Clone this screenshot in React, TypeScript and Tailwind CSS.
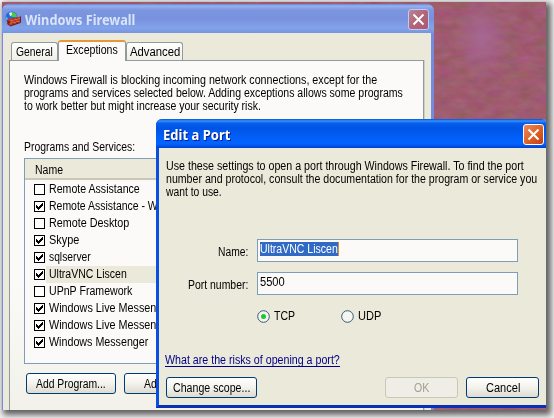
import { useLayoutEffect, useRef, useState } from "react";
import type { ReactNode } from "react";

// One line of text, condensed or widened so that it fills the given width.
function Line({ w, children, className = "" }: { w: number; children: string; className?: string }) {
  const ref = useRef<HTMLSpanElement>(null);
  const [scale, setScale] = useState(1);
  useLayoutEffect(() => {
    if (ref.current) setScale(w / ref.current.offsetWidth);
  }, [w, children]);
  return (
    <span className={`block ${className}`} style={{ width: w }}>
      <span ref={ref} className="inline-block origin-left whitespace-pre" style={{ transform: `scaleX(${scale})` }}>
        {children}
      </span>
    </span>
  );
}

function Wallpaper() {
  return (
    <svg className="absolute inset-0" width="544" height="408">
      <defs>
        <filter id="grain" x="0" y="0" width="100%" height="100%" colorInterpolationFilters="sRGB">
          <feTurbulence type="fractalNoise" baseFrequency="0.06 0.13" numOctaves="3" seed="8" />
          <feColorMatrix values="0.1 0 0 0 0.57  0 0.12 0 0 0.3  0.1 0 0.12 0 0.325  0 0 0 0 1" />
        </filter>
        <radialGradient id="glow">
          <stop offset="0" stopColor="#a8689a" stopOpacity="0.85" />
          <stop offset="1" stopColor="#a8689a" stopOpacity="0" />
        </radialGradient>
      </defs>
      <rect width="544" height="408" filter="url(#grain)" />
      <ellipse cx="480" cy="36" rx="28" ry="40" fill="url(#glow)" />
    </svg>
  );
}

function FirewallIcon() {
  return (
    <svg width="16" height="16" viewBox="0 0 16 16">
      <circle cx="6.500" cy="6.500" r="6" fill="#2468d8" />
      <path d="M5 2l3-1 3 2 1 3H8L5 5z" fill="#4fc84a" />
      <path d="M4 2l2.500-1L7 4 5 5z" fill="#d8f4ff" />
      <path d="M1.500 5.500 3 8l-1 2L.800 7z" fill="#58c8e0" />
      <path d="M3 7l2 1 10.500-2.500v6L5.500 15 2 12z" fill="#c43a20" />
      <path d="M2 9l3.500 2L3 13z" fill="#7a1614" />
      <path d="M5.500 9.800l10-2.300M5.500 12.200l10-2.500" stroke="#f0a888" strokeWidth=".6" fill="none" />
      <path d="M8 7.500v1.800M12 6.500v1.800M10 8.800v2M14 8v2M8 11.500v2.300M12 10.500v2.300" stroke="#6a1410" strokeWidth=".7" />
      <path d="M2 12.500l3.500 2.500 10-3.500V5.500" stroke="#4b1010" fill="none" strokeWidth=".8" />
    </svg>
  );
}

function CloseButton({ active }: { active?: boolean }) {
  return (
    <div
      className={`flex size-[21px] shrink-0 items-center justify-center rounded-[3px] border ${
        active
          ? "border-white bg-linear-to-br from-[#ef8660] via-[#df6426] to-[#c13c16]"
          : "border-[#bdcaf3] bg-linear-to-br from-[#b98398] via-[#b26577] to-[#a85a76]"
      }`}
    >
      <svg width="13" height="13" viewBox="0 0 13 13">
        <path d="M1.500 1.500l10 10M11.500 1.500l-10 10" stroke="#fff" strokeWidth="2" />
      </svg>
    </div>
  );
}

function Button({ children, className = "", disabled }: { children: ReactNode; className?: string; disabled?: boolean }) {
  return (
    <div
      className={`flex h-[21px] shrink-0 items-center justify-center rounded-[3px] border ${
        disabled
          ? "border-[#c9c7ba] bg-[#efeee6] text-[#a1a192]"
          : "border-[#003c74] bg-linear-to-b from-white via-[#f3f2ec] to-[#dedbd0]"
      } ${className}`}
    >
      {children}
    </div>
  );
}

function Checkbox({ checked }: { checked: boolean }) {
  return (
    <svg className="shrink-0" width="11" height="11" shapeRendering="crispEdges">
      <rect x=".5" y=".5" width="10" height="10" fill="#fff" stroke="#000" />
      {checked && <path d="M2 4h1v1h1v1h1v-1h1v-1h1v-1h1v-1h1v3h-1v1h-1v1h-1v1h-1v1h-1v-1h-1v-1h-1z" fill="#000" />}
    </svg>
  );
}

function Radio({ checked }: { checked?: boolean }) {
  return (
    <svg width="13" height="13">
      <circle cx="6.500" cy="6.500" r="5.800" fill="#f5f5f1" stroke="#3a5875" />
      {checked && <circle cx="6.500" cy="6.500" r="2.500" fill="#1fc832" />}
    </svg>
  );
}

const services = [
  { name: "Remote Assistance", w: 91, on: false },
  { name: "Remote Assistance - W", w: 109, on: true },
  { name: "Remote Desktop", w: 80, on: false },
  { name: "Skype", w: 30, on: true },
  { name: "sqlserver", w: 42, on: true },
  { name: "UltraVNC Liscen", w: 78, on: true, selected: true },
  { name: "UPnP Framework", w: 83, on: false },
  { name: "Windows Live Messen", w: 107, on: true },
  { name: "Windows Live Messen", w: 107, on: true },
  { name: "Windows Messenger", w: 99, on: true },
];

function FirewallWindow() {
  return (
    <div className="absolute top-[2px] left-0 flex h-[430px] w-[432px] flex-col overflow-hidden rounded-t-[7px] bg-[#758be0]">
      <div className="flex h-[29px] shrink-0 items-center justify-between bg-[linear-gradient(#6684da_0px,#98b1ed_2px,#7c96df_6px,#7991de_15px,#82a3e9_24px,#7794df_29px)] pr-[5px] pl-[3px]">
        <div className="flex items-center gap-1">
          <FirewallIcon />
          <Line w={110} className="pt-[2px] font-['Noto_Sans'] text-[14px] leading-[18px] font-bold text-[#d8e4f8]">Windows Firewall</Line>
        </div>
        <div className="pt-[2px]"><CloseButton /></div>
      </div>
      <div className="mr-[3px] ml-px flex flex-1 flex-col bg-[#ebe9d9] pt-[7px] pr-[7px] pl-[6px]">
        <div className="flex h-[20px] shrink-0 items-end pl-[2px]">
          <div className="flex h-[18px] w-[47px] justify-center rounded-t-[3px] border border-b-0 border-[#919b9c] bg-linear-to-b from-white to-[#efeee7] pt-[2px]">
            <Line w={37}>General</Line>
          </div>
          <div className="relative z-10 -mb-px flex h-[21px] w-[68px] justify-center rounded-t-[3px] border-x border-t-2 border-x-[#919b9c] border-t-[#e69738] bg-[#fbfaf8] pt-px">
            <Line w={52}>Exceptions</Line>
          </div>
          <div className="flex h-[18px] w-[57px] justify-center rounded-t-[3px] border border-b-0 border-[#919b9c] bg-linear-to-b from-white to-[#efeee7] pt-[2px]">
            <Line w={50}>Advanced</Line>
          </div>
        </div>
        <div className="flex flex-1 flex-col border border-[#919b9c] bg-linear-to-b from-[#fbfaf8] from-60% to-[#f0f0e8] px-[14px] pt-[13px] shadow-[1px_0_0_#cfcdbf]">
          <div className="leading-[13px]">
            <Line w={353}>Windows Firewall is blocking incoming network connections, except for the</Line>
            <Line w={379}>programs and services selected below. Adding exceptions allows some programs</Line>
            <Line w={237}>to work better but might increase your security risk.</Line>
          </div>
          <Line w={111} className="mt-[28px] leading-[13px]">Programs and Services:</Line>
          <div className="mt-[4px] h-[206px] shrink-0 border border-[#7f9db9] bg-[#fbfaf8]">
            <div className="mb-px flex h-[21px] items-center border-b-2 border-[#cbc7b8] bg-[#ebe9d9] pt-[3px] pl-[10px]">
              <Line w={28}>Name</Line>
            </div>
            {services.map((s, i) => (
              <div key={i} className="flex h-[17px] items-center pl-[9px]">
                <Checkbox checked={s.on} />
                <div className={`ml-px h-full flex-1 pl-[3px] leading-[17px] ${s.selected ? "bg-[#ebe9d9]" : ""}`}>
                  <Line w={s.w}>{s.name}</Line>
                </div>
              </div>
            ))}
          </div>
          <div className="mt-[9px] flex gap-[8px] pl-[2px]">
            <Button className="w-[90px]"><Line w={70}>Add Program...</Line></Button>
            <Button className="w-[90px] justify-start pl-[19px]"><Line w={13}>Ad</Line></Button>
          </div>
        </div>
      </div>
    </div>
  );
}

function Field({ label, lw, children }: { label: string; lw: number; children: ReactNode }) {
  return (
    <div className="flex h-[23px] items-center">
      <div className="flex w-[88px] justify-end pt-[3px]"><Line w={lw}>{label}</Line></div>
      <div className="ml-[9px] h-[23px] w-[261px] border border-[#7f9db9] bg-[#fbfaf8] pt-[2px] pl-[2px]">{children}</div>
    </div>
  );
}

function PortDialog() {
  return (
    <div className="absolute top-[117px] left-[154px] flex h-[289px] w-[392px] flex-col rounded-t-[6px] border-b-[3px] border-l-[3px] border-[#0831b5] border-l-[#0b4fe0] bg-[#ebe9d9]">
      <div className="-ml-[3px] flex h-[29px] shrink-0 items-center justify-between rounded-t-[6px] bg-[linear-gradient(#0750c8_0px,#3a91ff_2px,#0560ed_4px,#0054e3_9px,#0260fb_20px,#0264ff_25px,#0040cf_29px)] pr-[4px] pl-[7px]">
        <Line w={67} className="pt-[3px] font-['Noto_Sans'] text-[14px] leading-[18px] font-bold text-white [text-shadow:1px_1px_#0a1883]">Edit a Port</Line>
        <div className="pt-px"><CloseButton active /></div>
      </div>
      <div className="flex flex-col pt-[12px] pl-[7px]">
        <div className="leading-[13px]">
          <Line w={358}>Use these settings to open a port through Windows Firewall. To find the port</Line>
          <Line w={371}>number and protocol, consult the documentation for the program or service you</Line>
          <Line w={56}>want to use.</Line>
        </div>
        <div className="mt-[40px] -ml-[6px] flex flex-col gap-[10px]">
          <Field label="Name:" lw={30}>
            <span className="block w-[79px] border-r border-[#d98c35] bg-[#316ac5] text-white">
              <Line w={78} className="leading-[14px]">UltraVNC Liscen</Line>
            </span>
          </Field>
          <Field label="Port number:" lw={60}><Line w={25} className="leading-[14px]">5500</Line></Field>
        </div>
        <div className="mt-[14px] flex h-[14px] items-center pl-[91px]">
          <div className="flex w-[84px] items-center gap-[4px]"><Radio checked /><Line w={21}>TCP</Line></div>
          <div className="flex items-center gap-[4px]"><Radio /><Line w={23}>UDP</Line></div>
        </div>
        <Line w={175} className="mt-[31px] -ml-px h-[13px] border-b border-[#00008b] leading-[13px] text-[#00008b]">What are the risks of opening a port?</Line>
        <div className="mt-[10px] flex">
          <Button className="w-[91px]"><Line w={77}>Change scope...</Line></Button>
          <Button disabled className="ml-[128px] w-[73px]"><Line w={15}>OK</Line></Button>
          <Button className="ml-[8px] w-[73px]"><Line w={34}>Cancel</Line></Button>
        </div>
      </div>
    </div>
  );
}

export default function App() {
  return (
    <div className="h-[418px] w-[554px] overflow-hidden bg-[#f5f5f5] pt-[2px] pl-[2px] font-['Liberation_Sans',Arial,sans-serif] text-[12px] leading-[14px] text-black">
      <div className="h-[408px] w-[544px] shadow-[3px_3px_6px_2px_#606060]">
        <div className="relative h-full w-full overflow-hidden">
          <Wallpaper />
          <FirewallWindow />
          <PortDialog />
        </div>
      </div>
    </div>
  );
}
